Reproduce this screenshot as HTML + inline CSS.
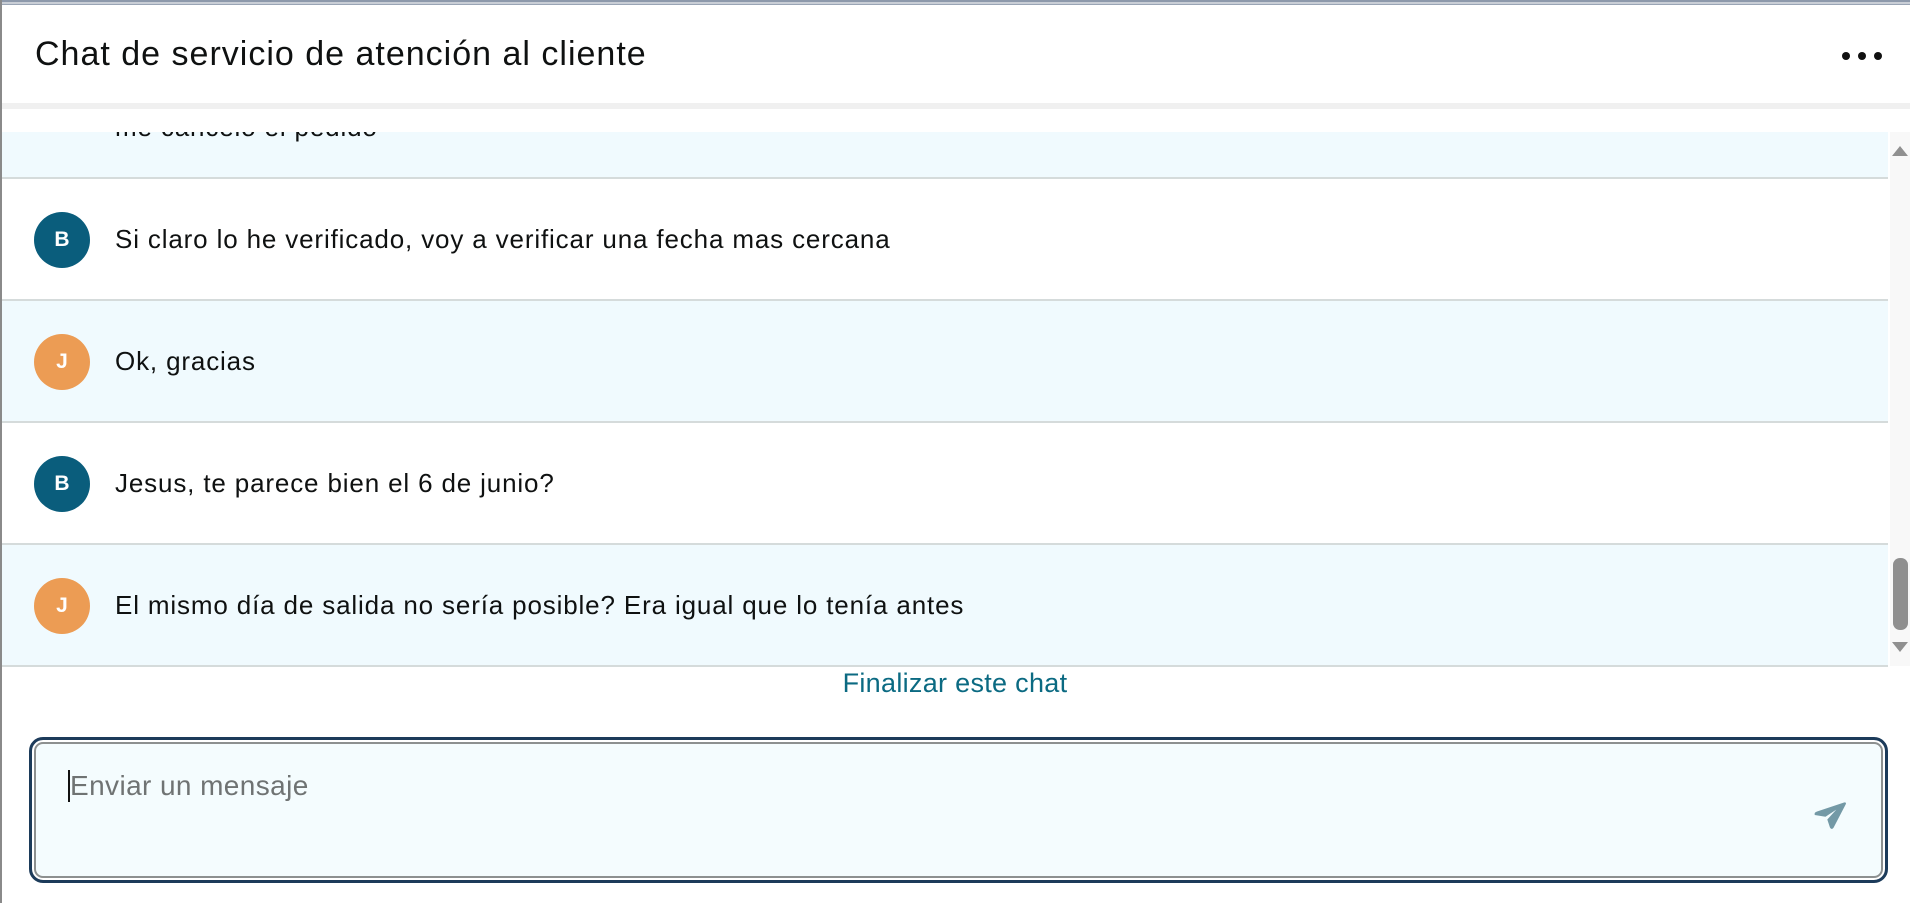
<!DOCTYPE html>
<html><head><meta charset="utf-8"><style>
*{margin:0;padding:0;box-sizing:border-box}
body{width:1910px;height:903px;overflow:hidden;background:#fff;font-family:"Liberation Sans",sans-serif;color:#0f1111;position:relative}
.topline{position:absolute;left:0;top:0;width:1910px;height:5px;background:#c9ced6;border-top:2px solid #8d99ab;border-bottom:1px solid #9aa5b5}
.leftline{position:absolute;left:0;top:0;width:2px;height:903px;background:#8a8a8a}
.title{position:absolute;left:35px;top:35px;font-size:34px;letter-spacing:1px}
.dots{position:absolute;left:1842px;top:47px}
.dots i{display:inline-block;width:8px;height:8px;border-radius:50%;background:#111;margin-right:8px}
.sep{position:absolute;left:2px;top:103px;width:1908px;height:6px;background:#f0f0f0}
.row{position:absolute;left:2px;width:1886px;height:122px;border-bottom:2px solid #d5dbdb}
.blue{background:#f0fafe}
.av{position:absolute;left:32px;top:33px;width:56px;height:56px;border-radius:50%;color:#fff;font-weight:bold;font-size:21px;text-align:center;line-height:56px}
.b{background:#0a5d7c}.j{background:#ec9c54}
.txt{position:absolute;left:113px;top:45px;font-size:26px;letter-spacing:0.85px}
.sb{position:absolute;left:1890px;top:132px;width:20px;height:534px;background:#f8f8f8}
.fin{position:absolute;left:0;width:1910px;top:668px;text-align:center;font-size:27px;letter-spacing:0.3px;color:#0b6a82}
.inp{position:absolute;left:29px;top:737px;width:1859px;height:146px;border:3px solid #1c3b5a;border-radius:14px;background:#f4fcfe;box-shadow:inset 0 0 0 2px #fff,inset 0 0 0 4px #8c9090}
.ph{position:absolute;left:36px;top:30px;font-size:28px;letter-spacing:0.4px;color:#6f7373;border-left:2px solid #111}
</style></head><body>
<div class="topline"></div>
<div class="title">Chat de servicio de atención al cliente</div>
<div class="dots"><i></i><i></i><i></i></div>
<div class="sep"></div>
<div class="row blue" style="top:132px;height:47px;overflow:hidden"><div class="txt" style="top:-20px">me canceló el pedido</div></div>
<div class="row" style="top:179px"><div class="av b">B</div><div class="txt">Si claro lo he verificado, voy a verificar una fecha mas cercana</div></div>
<div class="row blue" style="top:301px"><div class="av j">J</div><div class="txt">Ok, gracias</div></div>
<div class="row" style="top:423px"><div class="av b">B</div><div class="txt">Jesus, te parece bien el 6 de junio?</div></div>
<div class="row blue" style="top:545px"><div class="av j">J</div><div class="txt">El mismo día de salida no sería posible? Era igual que lo tenía antes</div></div>
<div class="sb">
<svg width="20" height="534" style="position:absolute;left:0;top:0"><path d="M2 24 L10 14 L18 24Z" fill="#909090"/><rect x="3" y="426" width="15" height="72" rx="7" fill="#8f8f8f"/><path d="M2 510 L10 520 L18 510Z" fill="#909090"/></svg>
</div>
<div class="leftline"></div>
<div class="fin">Finalizar este chat</div>
<div class="inp"><div class="ph">Enviar un mensaje</div>
<svg style="position:absolute;left:1780px;top:57px" width="36" height="36" viewBox="0 0 40 40"><path d="M3 20 Q2 17 6 16 L36 6 Q39 6 37 9 L24 34 Q22 37 20 34 L17 25 L27 14 L15 22 Z" fill="#7399a6"/></svg>
</div>
</body></html>
